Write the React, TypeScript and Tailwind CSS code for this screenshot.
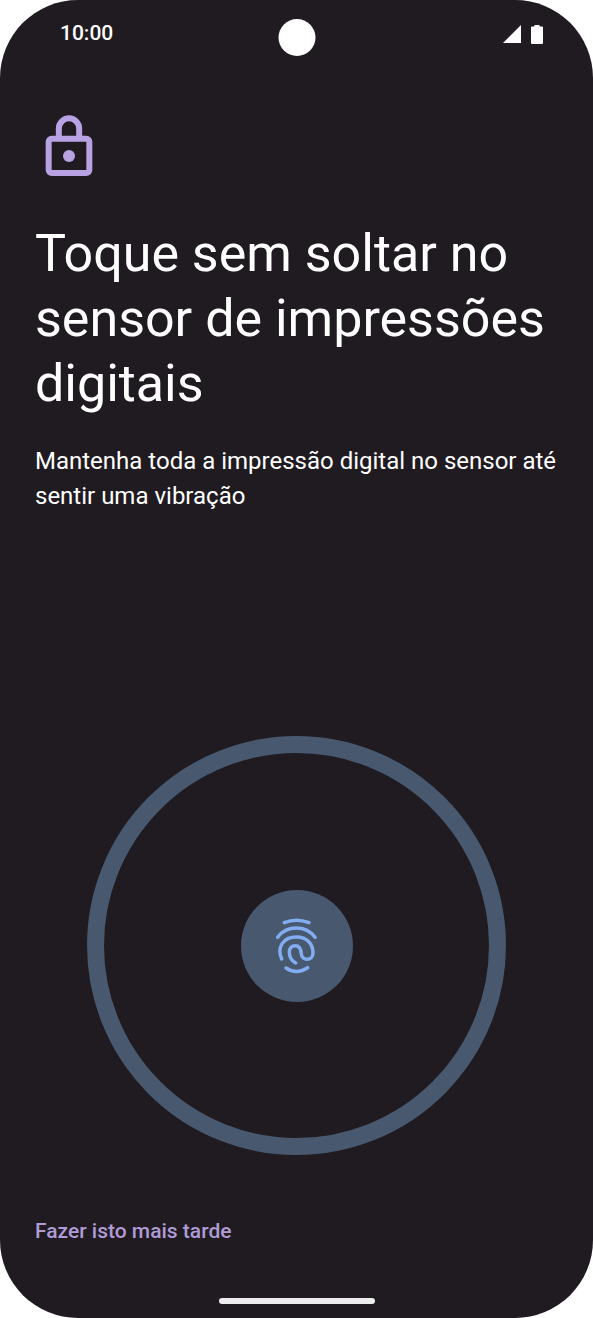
import React from "react";

function SignalIcon() {
  return (
    <svg viewBox="0 0 18 18" className="w-[18px] h-[18px] fill-white" aria-hidden="true">
      <path d="M18 0V18H0Z" />
    </svg>
  );
}

function BatteryIcon() {
  return (
    <svg viewBox="0 0 12 19" className="w-3 h-[19px] fill-white" aria-hidden="true">
      <path d="M3.500 0h5v1.500H11a1 1 0 0 1 1 1V18a1 1 0 0 1-1 1H1a1 1 0 0 1-1-1V2.500a1 1 0 0 1 1-1h2.500Z" />
    </svg>
  );
}

function LockIcon() {
  return (
    <svg viewBox="0 0 144 186" className="w-12 h-[62px]" fill="none" stroke="#b8a2e3" strokeWidth="18" aria-hidden="true">
      <rect x="11" y="71" width="122" height="103" rx="9" />
      <path d="M41.500 71V40.500a30.500 30.500 0 0 1 61 0V71" />
      <circle cx="72" cy="123" r="18" fill="#b8a2e3" stroke="none" />
    </svg>
  );
}

function FingerprintIcon() {
  return (
    <svg viewBox="0 0 126 174" className="w-[42px] h-[58px]" fill="none" stroke="#82adf0" strokeWidth="10.500" strokeLinecap="round" aria-hidden="true">
      <path d="M25 17Q61 2 99 17" />
      <path d="M5 61C32 24 90 24 117 61" />
      <path d="M17 126C2 91 21 60 61 60C94 60 111 82 111 107C111 119 103 127 93 127C84 127 77 120 76 111C75 95 71 86 58 86C47 86 40 94 40 105C40 120 46 131 59 138" />
      <path d="M30 153Q61 174 95 152" />
    </svg>
  );
}

export default function App() {
  return (
    <div className="bg-white font-[Roboto,sans-serif]">
      <div className="relative flex min-h-screen flex-col rounded-[78px] bg-[#1f1b20] text-white">
        <header className="flex h-[68px] items-center justify-between pl-[60px] pr-[50px]">
          <time className="text-[21px] font-medium">10:00</time>
          <div className="flex items-center gap-2.5">
            <SignalIcon />
            <BatteryIcon />
          </div>
        </header>
        <div className="absolute left-1/2 top-[19px] size-[37px] -translate-x-1/2 rounded-full bg-white" />

        <main className="flex flex-1 flex-col px-[35px] pt-[47px]">
          <div className="pl-2.5">
            <LockIcon />
          </div>
          <h1 className="mt-11 text-[52px] leading-[65px]">Toque sem soltar no sensor de impressões digitais</h1>
          <p className="mt-7 text-2xl leading-[35px]">
            Mantenha toda a impressão digital no sensor até sentir uma vibração
          </p>
          <div className="mx-[52px] mt-auto flex aspect-square items-center justify-center rounded-full border-[17px] border-[#48586f]">
            <div className="flex size-28 items-center justify-center rounded-full bg-[#48586f]">
              <FingerprintIcon />
            </div>
          </div>
        </main>

        <footer className="px-[35px] pb-3.5 pt-[60px]">
          <button type="button" className="block text-[21px] font-medium leading-8 text-[#b09bd6]">
            Fazer isto mais tarde
          </button>
          <div className="mx-auto mt-[51px] h-1.5 w-[156px] rounded-full bg-[#ededed]" />
        </footer>
      </div>
    </div>
  );
}
